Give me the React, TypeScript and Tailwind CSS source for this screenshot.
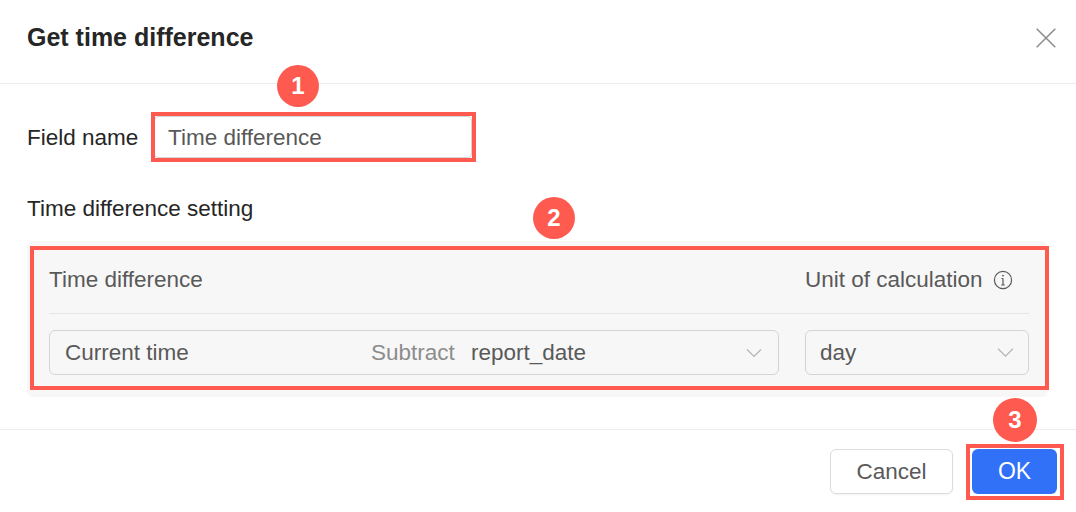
function Badge({ n, className }: { n: number; className: string }) {
  return (
    <div className={`absolute flex items-center justify-center rounded-full bg-[#ff5a4f] text-white text-[24px] font-bold ${className}`}>
      {n}
    </div>
  );
}

function Chevron({ className }: { className?: string }) {
  return (
    <svg viewBox="0 0 16 10" className={className} fill="none" stroke="#b5b5b5" strokeWidth="1.2">
      <path d="M1 1.5 8 8.5 15 1.5" />
    </svg>
  );
}

export default function App() {
  return (
    <div className="relative w-[1076px] h-[512px] bg-white overflow-hidden font-['Liberation_Sans',Arial,sans-serif] text-[22.5px] text-[#262626]">
      <div className="h-[84px] border-b border-[#ececec] flex items-center justify-between pl-[27px] pr-[20px] pb-[7px]">
        <h1 className="text-[25px] font-bold text-[#262626]">Get time difference</h1>
        <svg viewBox="0 0 20 20" className="w-[20px] h-[20px]" fill="none" stroke="#8c8c8c" strokeWidth="1.5">
          <path d="M0.7 0.7 19.3 19.3M19.3 0.7 0.7 19.3" />
        </svg>
      </div>

      <div className="h-[346px] border-b border-[#ececec] pt-[32px]">
        <div className="flex items-center pl-[27px]">
          <label className="w-[127px] pt-[2px]">Field name</label>
          <div className="w-[318px] h-[42px] border border-[#d4d4d4] rounded-[4px] flex items-center pl-[13px] pt-[2px] text-[#595959]">
            Time difference
          </div>
        </div>

        <div className="pl-[27px] mt-[38px] leading-[26px]">Time difference setting</div>

        <div className="mt-[19px] ml-[27px] w-[1021px] h-[156px] rounded-[6px] bg-[#f7f7f7] pl-[22px] pr-[19px] pt-[6px] text-[#595959]">
          <div className="h-[67px] flex items-center justify-between border-b border-[#e6e6e6]">
            <span>Time difference</span>
            <span className="w-[224px] flex items-center">
              Unit of calculation
              <svg viewBox="0 0 20 20" className="w-[20px] h-[20px] ml-[10px]" fill="none" stroke="#595959" strokeWidth="1.2">
                <circle cx="10" cy="10" r="8.6" />
                <path d="M10 8.5V15M8.2 15h3.6M8.4 8.5H10" />
                <circle cx="10" cy="5.6" r="0.9" fill="#595959" stroke="none" />
              </svg>
            </span>
          </div>
          <div className="flex justify-between mt-[16px]">
            <div className="w-[730px] h-[45px] border border-[#d4d4d4] rounded-[6px] flex items-center pl-[15px] pr-[16px]">
              <span className="w-[306px]">Current time</span>
              <span className="w-[100px] text-[#8c8c8c]">Subtract</span>
              <span className="flex-1">report_date</span>
              <Chevron className="w-[16px] h-[10px]" />
            </div>
            <div className="w-[224px] h-[45px] border border-[#d4d4d4] rounded-[6px] flex items-center justify-between pl-[14px] pr-[14px]">
              <span>day</span>
              <Chevron className="w-[17px] h-[11px]" />
            </div>
          </div>
        </div>
      </div>

      <div className="flex justify-end gap-[19px] pr-[19px] pt-[19px]">
        <button className="w-[123px] h-[45px] border border-[#dcdcdc] rounded-[6px] bg-white text-[#595959] shadow-[0_1px_2px_rgba(0,0,0,0.06)]">
          Cancel
        </button>
        <button className="w-[85px] h-[45px] rounded-[6px] bg-[#3071f8] text-white text-[23px]">OK</button>
      </div>

      {/* annotations */}
      <div className="absolute left-[151px] top-[112px] w-[325px] h-[50px] border-[4px] border-[#ff5a4f]" />
      <div className="absolute left-[30px] top-[246px] w-[1019px] h-[144px] border-[4px] border-[#ff5a4f]" />
      <div className="absolute left-[966px] top-[444px] w-[98px] h-[56px] border-[4px] border-[#ff5a4f]" />
      <Badge n={1} className="left-[277px] top-[65px] w-[42px] h-[42px]" />
      <Badge n={2} className="left-[533px] top-[197px] w-[42px] h-[42px]" />
      <Badge n={3} className="left-[993px] top-[398px] w-[44px] h-[44px]" />
    </div>
  );
}
